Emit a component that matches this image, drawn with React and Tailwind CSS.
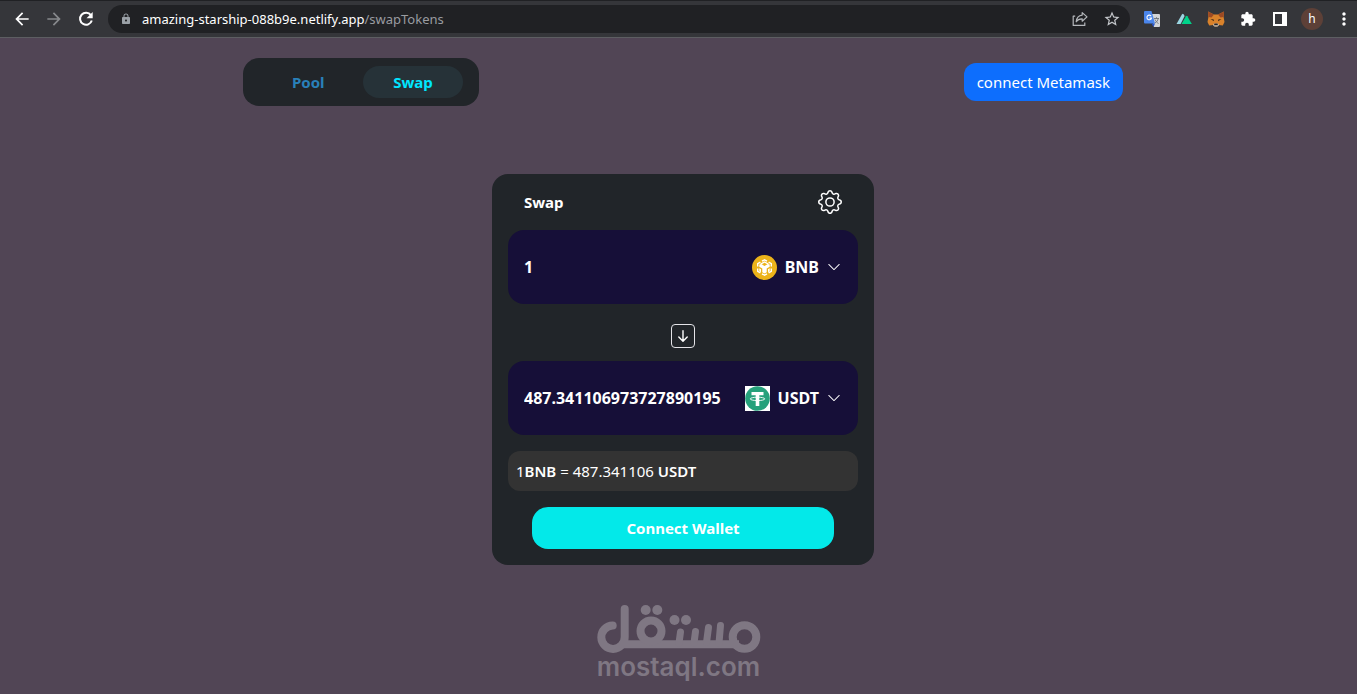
import React, { useState } from "react";
import { BsGear, BsChevronDown } from "react-icons/bs";
import { MdArrowBack, MdArrowForward, MdLock, MdExtension, MdMoreVert, MdStarBorder } from "react-icons/md";

function ReloadIcon() {
  return (
    <svg viewBox="0 0 20 20" className="size-5">
      <path d="M14.900 6.200A6 6 0 1 0 15.800 11.500" fill="none" stroke="#fff" strokeWidth="2" />
      <path d="M16.700 3v6.200h-6.200z" fill="#fff" />
    </svg>
  );
}

function ShareIcon() {
  return (
    <svg viewBox="0 0 16 16" className="size-4" fill="none" stroke="#b4b7bb" strokeWidth="1.2" strokeLinejoin="round">
      <path d="M3.2 5.2H1.2v9.2h11.6v-3" />
      <path d="M10.2 1.6l4.8 4.3-4.8 4.3V7.8C7.4 7.7 5.6 8.6 4.2 10.8 4.5 7.2 6.5 4.5 10.2 4.1z" />
    </svg>
  );
}

function TranslateIcon() {
  return (
    <svg viewBox="0 0 16 16" className="size-4">
      <path d="M7 3h8a1 1 0 0 1 1 1v11a1 1 0 0 1-1 1H10z" fill="#d3d5d8" />
      <path d="M1 0h6.500l3.500 12.500H1a1 1 0 0 1-1-1V1a1 1 0 0 1 1-1z" fill="#4b86ec" />
      <path d="M7.500 12.500H11L9.500 16z" fill="#2a56c6" />
      <path d="M7.200 5.200A2.300 2.300 0 1 0 7.500 7H5.400" fill="none" stroke="#fff" strokeWidth="1.1" />
      <path d="M10 7.500h5M12.500 6.200v1.300M14.200 7.500c-.4 2-1.500 3.500-3.200 4.500M11 8.500c.6 1.500 1.800 3 3.500 4" fill="none" stroke="#6b7077" strokeWidth="0.9" />
    </svg>
  );
}

function PeaksIcon() {
  return (
    <svg viewBox="0 0 16 12" className="h-3 w-4">
      <path d="M0.500 11L6 1.200Q6.800.2 7.600 1.200L8.600 3 4.600 11z" fill="#9bd6e2" />
      <path d="M5.500 11L10 3.200q.7-.9 1.400 0L15.800 11z" fill="#00d38a" />
    </svg>
  );
}

function FoxIcon() {
  return (
    <svg viewBox="0 0 18 16" className="h-4 w-[18px]">
      <path d="M1 0.500L7 3.500h4l6-3-.4 5.500.9 5-1.700 3.500-3.800-.5L10.500 15.500h-3L6 14l-3.800.5L.5 11l.9-5z" fill="#d9822b" />
      <path d="M1 0.500L7 3.500 4.500 6.500 1.400 6zM17 .5l-6 3 2.500 3 3.100-.5z" fill="#9c4a24" />
      <path d="M3.500 8l3.200.5.2 1.700zM14.500 8l-3.200.5-.2 1.700z" fill="#33231a" />
      <path d="M6 14l1-1.500h4L12 14l-1.500 1.500h-3z" fill="#c9c2bb" />
      <path d="M7.400 12.500h3.200l.4 1.700H7z" fill="#2a2523" />
    </svg>
  );
}

function BnbIcon() {
  return (
    <svg viewBox="0 0 25 25" className="size-[25px]">
      <circle cx="12.5" cy="12.5" r="12.5" fill="#ecb31a" />
      <g fill="none" stroke="#fff" strokeWidth="1.4">
        <path d="M10 6.200L12.500 4.800l2.500 1.400M16.600 7.100l2.700 1.600v2.900M19.300 13.400v2.900l-2.700 1.600M15 18.800l-2.500 1.400L10 18.800M8.400 17.900l-2.700-1.600v-2.900M5.700 11.600V8.700l2.700-1.600" />
        <path d="M8.600 9.100l3.900-2.100 3.900 2.100" />
      </g>
      <path d="M7.300 9.600l1.800-.6 3.400 1.900 3.400-1.900 1.800.6v2.200l-3 1.800v3.600l-2.200 1.300-2.200-1.300v-3.600l-3-1.800z" fill="#fff" />
      <path d="M7.300 13.200l1.700 1v3l-1.700-1zM17.700 13.200l-1.700 1v3l1.700-1z" fill="#fff" />
    </svg>
  );
}

function UsdtIcon() {
  return (
    <svg viewBox="0 0 25 25" className="size-[25px]">
      <path d="M0 0h25v25H0z" fill="#fff" />
      <circle cx="12.5" cy="12.5" r="12.3" fill="#26a17b" />
      <path d="M6.500 6h12v3.200h-4.200V20h-3.600V9.200H6.500z" fill="#fff" />
      <ellipse cx="12.5" cy="12.9" rx="7.3" ry="1.7" fill="none" stroke="#fff" strokeWidth="0.9" />
    </svg>
  );
}

function MostaqlMark() {
  return (
    <svg viewBox="0 0 164 50" className="h-[50px] w-[164px]" role="img" aria-label="مستقل" fill="none" stroke="#7f7783" strokeWidth="8" strokeLinecap="round">
      <path d="M15.700 20.500A11.700 11.700 0 1 0 27.700 32V4" />
      <path d="M24 39.300H142" strokeLinecap="butt" />
      <circle cx="54" cy="26" r="10.5" />
      <circle cx="147.500" cy="32" r="11.800" />
      <path d="M83.500 27L82 38M98.500 26.500L97 38M111.500 22.500l-2 15M123.500 20.500L122 38" strokeWidth="7" />
      <g fill="#7f7783" stroke="none">
        <circle cx="48.7" cy="5" r="5" />
        <circle cx="60.3" cy="5" r="5" />
        <circle cx="77.5" cy="15" r="5" />
        <circle cx="89" cy="15" r="5" />
      </g>
    </svg>
  );
}

function BrowserBar() {
  return (
    <header className="flex h-[38px] items-center border-t border-b border-t-[#202124] border-b-[#5d5e62] bg-[#35363a] pl-3 text-white">
      <div className="flex w-24 shrink-0 items-center gap-3">
        <button aria-label="Back"><MdArrowBack className="size-5" /></button>
        <button aria-label="Forward"><MdArrowForward className="size-5 text-[#87898c]" /></button>
        <button aria-label="Reload"><ReloadIcon /></button>
      </div>
      <div className="flex h-7 min-w-0 flex-1 items-center rounded-full bg-[#202124] pr-[9px] pl-3">
        <MdLock className="size-3 shrink-0 text-[#9aa0a6]" />
        <p className="ml-[10px] flex-1 truncate text-[13px]">
          amazing-starship-088b9e.netlify.app<span className="text-[#9a9ca1]">/swapTokens</span>
        </p>
        <div className="flex items-center gap-[15px]">
          <button aria-label="Share"><ShareIcon /></button>
          <button aria-label="Bookmark"><MdStarBorder className="size-[18px] text-[#c4c7cb]" /></button>
        </div>
      </div>
      <div className="ml-[6px] grid shrink-0 grid-cols-[repeat(6,32px)_29px] items-center justify-items-center">
        <button aria-label="Translate"><TranslateIcon /></button>
        <button aria-label="Peaks extension"><PeaksIcon /></button>
        <button aria-label="MetaMask"><FoxIcon /></button>
        <button aria-label="Extensions"><MdExtension className="size-4" /></button>
        <button aria-label="Side panel" className="h-3.5 w-3.5 border-2 border-r-[5px] border-white" />
        <button className="flex size-[22px] items-center justify-center rounded-full bg-[#5d4037] text-[12px]">h</button>
        <button aria-label="Menu" className="justify-self-end pr-[3px]"><MdMoreVert className="size-5" /></button>
      </div>
    </header>
  );
}

function TokenField({ label, value, onChange, symbol, icon }) {
  return (
    <div className="flex h-[74px] items-center rounded-2xl bg-[#160f38] pr-[17px] pl-4 text-[16px] font-bold">
      <input aria-label={label} value={value} onChange={onChange} className="min-w-0 flex-1 bg-transparent outline-none" />
      <button className="flex items-center gap-2">
        {icon}
        {symbol}
        <BsChevronDown className="size-3.5" />
      </button>
    </div>
  );
}

export default function App() {
  const [amount, setAmount] = useState("1");
  const [received, setReceived] = useState("487.341106973727890195");
  return (
    <div className="flex min-h-screen flex-col bg-[#514555] font-['Noto_Sans','Noto_Sans_CJK_SC',sans-serif] text-[15px] leading-6 text-white">
      <BrowserBar />
      <main className="flex flex-1 flex-col items-center pt-5 pl-[9px]">
        <div className="flex w-full max-w-[880px] items-center justify-between">
          <nav className="flex h-12 items-center rounded-2xl bg-[#212529] px-4 font-bold">
            <a href="#pool" className="w-[104px] pl-[33px] text-[#2980b9]">Pool</a>
            <a href="#swap" className="flex h-8 w-[100px] items-center justify-center rounded-full bg-[#263238] text-[#00e5ff]">Swap</a>
          </nav>
          <button className="h-[38px] rounded-xl bg-[#0d6efd] px-[13px]">connect Metamask</button>
        </div>
        <section className="mt-[68px] flex w-full max-w-[382px] flex-col rounded-2xl bg-[#212529] p-4">
          <div className="flex items-center justify-between px-4">
            <h1 className="font-bold">Swap</h1>
            <button aria-label="Settings"><BsGear className="size-6" /></button>
          </div>
          <div className="mt-4">
            <TokenField label="Amount to pay" value={amount} onChange={(e) => setAmount(e.target.value)} symbol="BNB" icon={<BnbIcon />} />
          </div>
          <button aria-label="Switch tokens" className="mx-auto mt-5 mb-[13px] flex size-6 items-center justify-center rounded border border-[#e4e4e8]">
            <svg viewBox="0 0 12 12" className="size-3" fill="none" stroke="currentColor" strokeWidth="1.4" strokeLinecap="round" strokeLinejoin="round">
              <path d="M6 0.800V11M1.800 7L6 11.200 10.200 7" />
            </svg>
          </button>
          <TokenField label="Amount to receive" value={received} onChange={(e) => setReceived(e.target.value)} symbol="USDT" icon={<UsdtIcon />} />
          <p className="mt-4 rounded-xl bg-[#333333] p-2"><span>1</span><span className="font-semibold">BNB</span> = 487.341106 <span className="font-semibold">USDT</span></p>
          <button className="mx-6 mt-4 h-[42px] rounded-2xl bg-[#03e9e9] font-bold">Connect Wallet</button>
        </section>
        <div className="mt-10 mr-[9px] flex flex-col items-center text-[#7f7783]">
          <MostaqlMark />
          <span className="font-['Inter',sans-serif] text-[26px] leading-6 font-semibold">mostaql.com</span>
        </div>
      </main>
    </div>
  );
}
